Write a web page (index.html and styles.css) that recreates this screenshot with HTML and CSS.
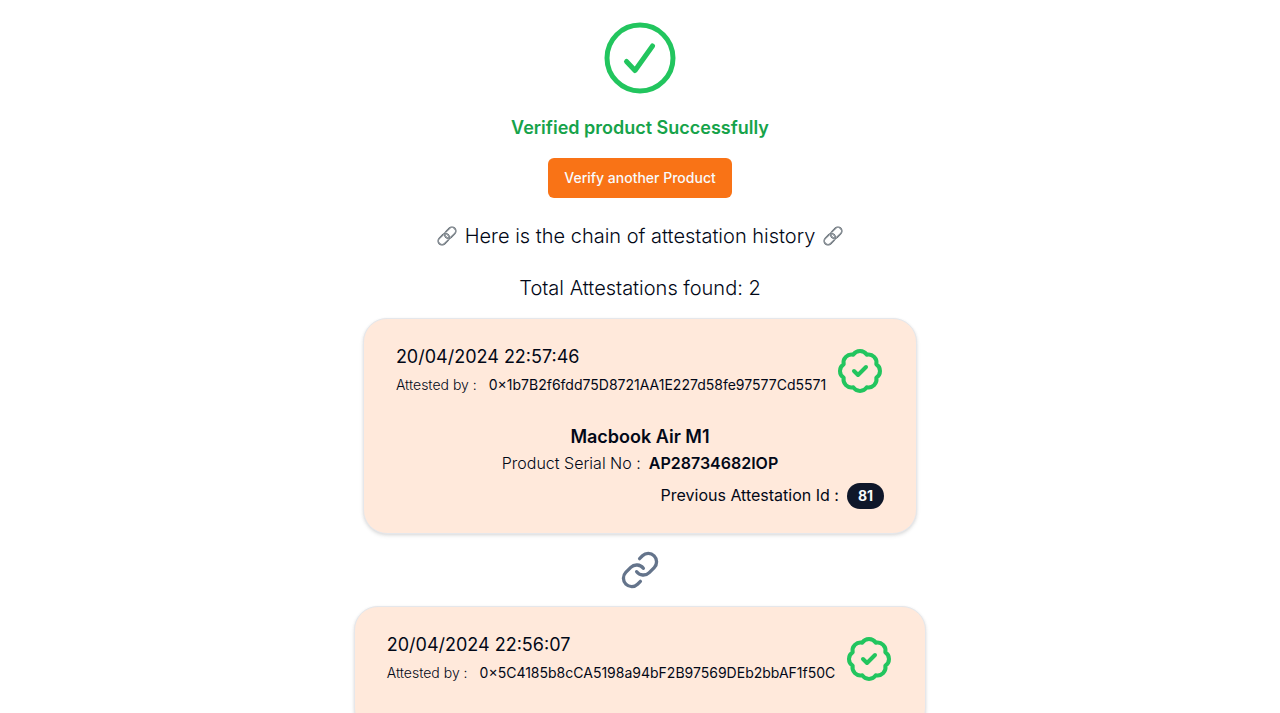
FILE: index.html
```html
<!DOCTYPE html>
<html lang="en">
<head>
<meta charset="utf-8">
<meta name="viewport" content="width=device-width, initial-scale=1">
<title>Product verification</title>
<link rel="stylesheet" href="styles.css">
</head>
<body>
<svg class="sprite" aria-hidden="true">
  <symbol id="badge-check" viewBox="0 0 24 24">
    <path d="M3.85 8.62a4 4 0 0 1 4.78-4.77 4 4 0 0 1 6.74 0 4 4 0 0 1 4.78 4.78 4 4 0 0 1 0 6.74 4 4 0 0 1-4.77 4.78 4 4 0 0 1-6.75 0 4 4 0 0 1-4.78-4.77 4 4 0 0 1 0-6.76Z"/>
    <path d="m9 12 2 2 4-4"/>
  </symbol>
  <symbol id="chain" viewBox="0 0 20 20">
    <g fill="none" transform="rotate(-45 10 10)">
      <rect x="-.8" y="6.2" width="12.4" height="7.6" rx="3.8" stroke="#4f5860" stroke-width="1.6"/>
      <rect x="-.8" y="6.2" width="12.4" height="7.6" rx="3.8" stroke="#c3c9ce" stroke-width=".6"/>
      <rect x="8.4" y="6.2" width="12.4" height="7.6" rx="3.8" stroke="#4f5860" stroke-width="1.6"/>
      <rect x="8.4" y="6.2" width="12.4" height="7.6" rx="3.8" stroke="#c3c9ce" stroke-width=".6"/>
    </g>
  </symbol>
</svg>
<main class="page">
  <svg class="icon success-icon" viewBox="0 0 72 72" aria-hidden="true">
    <circle cx="36" cy="36" r="33"/>
    <path d="M22.5 39.5 31 48.5 48.5 24"/>
  </svg>
  <h1 class="status">Verified product Successfully</h1>
  <button class="verify-button" type="button">Verify another Product</button>
  <h2 class="headline">
    <svg class="chain" aria-hidden="true"><use href="#chain"/></svg>
    <span>Here is the chain of attestation history</span>
    <svg class="chain" aria-hidden="true"><use href="#chain"/></svg>
  </h2>
  <p class="total">Total Attestations found: 2</p>

  <article class="card">
    <header class="card-header">
      <div>
        <time class="date">20/04/2024 22:57:46</time>
        <p class="attester"><span>Attested by :</span><span class="address">0×1b7B2f6fdd75D8721AA1E227d58fe97577Cd5571</span></p>
      </div>
      <svg class="icon badge-icon" aria-hidden="true"><use href="#badge-check"/></svg>
    </header>
    <h3 class="product">Macbook Air M1</h3>
    <p class="serial"><span>Product Serial No :</span><strong class="serial-number">AP28734682IOP</strong></p>
    <p class="previous"><span>Previous Attestation Id :</span><span class="pill">81</span></p>
  </article>

  <svg class="icon link-icon" viewBox="0 0 24 24" aria-hidden="true">
    <path d="M10 13a5 5 0 0 0 7.54.54l3-3a5 5 0 0 0-7.07-7.07l-1.72 1.71"/>
    <path d="M14 11a5 5 0 0 0-7.54-.54l-3 3a5 5 0 0 0 7.07 7.07l1.71-1.71"/>
  </svg>

  <article class="card card-last">
    <header class="card-header">
      <div>
        <time class="date">20/04/2024 22:56:07</time>
        <p class="attester"><span>Attested by :</span><span class="address">0×5C4185b8cCA5198a94bF2B97569DEb2bbAF1f50C</span></p>
      </div>
      <svg class="icon badge-icon" aria-hidden="true"><use href="#badge-check"/></svg>
    </header>
  </article>
</main>
</body>
</html>
```
FILE: styles.css
```css
* {
  box-sizing: border-box;
}

body,
h1,
h2,
h3,
p {
  margin: 0;
}

body {
  background: #fff;
  color: #020817;
  font-family: Inter, "Liberation Sans", sans-serif;
  font-size: 16px;
  line-height: 24px;
}

.sprite {
  position: absolute;
  width: 0;
  height: 0;
}

.page {
  display: flex;
  flex-direction: column;
  align-items: center;
  height: 100vh;
  overflow: hidden;
  padding-top: 22px;
}

.page > * {
  flex-shrink: 0;
}

.icon {
  display: block;
  flex-shrink: 0;
  fill: none;
  stroke: #22c55e;
  stroke-width: 2;
  stroke-linecap: round;
  stroke-linejoin: round;
}

.success-icon {
  width: 72px;
  height: 72px;
  stroke-width: 5;
}

.status {
  margin-top: 20px;
  color: #16a34a;
  font-size: 18px;
  font-weight: 600;
  line-height: 28px;
}

.verify-button {
  margin-top: 16px;
  padding: 10px 16px;
  border: 0;
  border-radius: 6px;
  background: #f97316;
  color: #f8fafc;
  font: 500 14px/20px Inter, "Liberation Sans", sans-serif;
  cursor: pointer;
}

.headline,
.total {
  font-size: 20px;
  font-weight: 300;
  line-height: 28px;
}

.headline {
  display: flex;
  align-items: center;
  gap: 8px;
  margin-top: 24px;
}

.chain {
  width: 20px;
  height: 20px;
}

.total {
  margin-top: 24px;
}

.card {
  max-width: 100%;
  margin-top: 16px;
  padding: 24px 32px;
  border: 1px solid #e5e7eb;
  border-radius: 24px;
  background: #ffe9db;
  box-shadow: 0 1px 3px rgb(0 0 0 / 8%), 0 2px 4px rgb(0 0 0 / 8%);
}

.card-last {
  padding-bottom: 48px;
}

.card-header {
  display: flex;
  align-items: flex-end;
  justify-content: space-between;
  gap: 10px;
}

.date {
  display: block;
  font-size: 18px;
  line-height: 28px;
}

.attester {
  display: flex;
  gap: 12px;
  margin-top: 4px;
  font-size: 14px;
  font-weight: 300;
  line-height: 20px;
}

.address {
  font-weight: 400;
}

.badge-icon {
  width: 48px;
  height: 48px;
}

.product {
  margin-top: 28px;
  font-size: 18px;
  font-weight: 600;
  line-height: 28px;
  text-align: center;
}

.serial {
  display: flex;
  justify-content: center;
  gap: 8px;
  font-weight: 300;
}

.serial-number {
  font-weight: 600;
}

.previous {
  display: flex;
  align-items: flex-start;
  justify-content: flex-end;
  gap: 8px;
  margin-top: 8px;
}

.pill {
  padding: 3px 11px;
  border-radius: 13px;
  background: #0f172a;
  color: #f8fafc;
  font-size: 14px;
  font-weight: 700;
  line-height: 20px;
}

.link-icon {
  width: 40px;
  height: 40px;
  margin-top: 16px;
  stroke: #64748b;
}
```
